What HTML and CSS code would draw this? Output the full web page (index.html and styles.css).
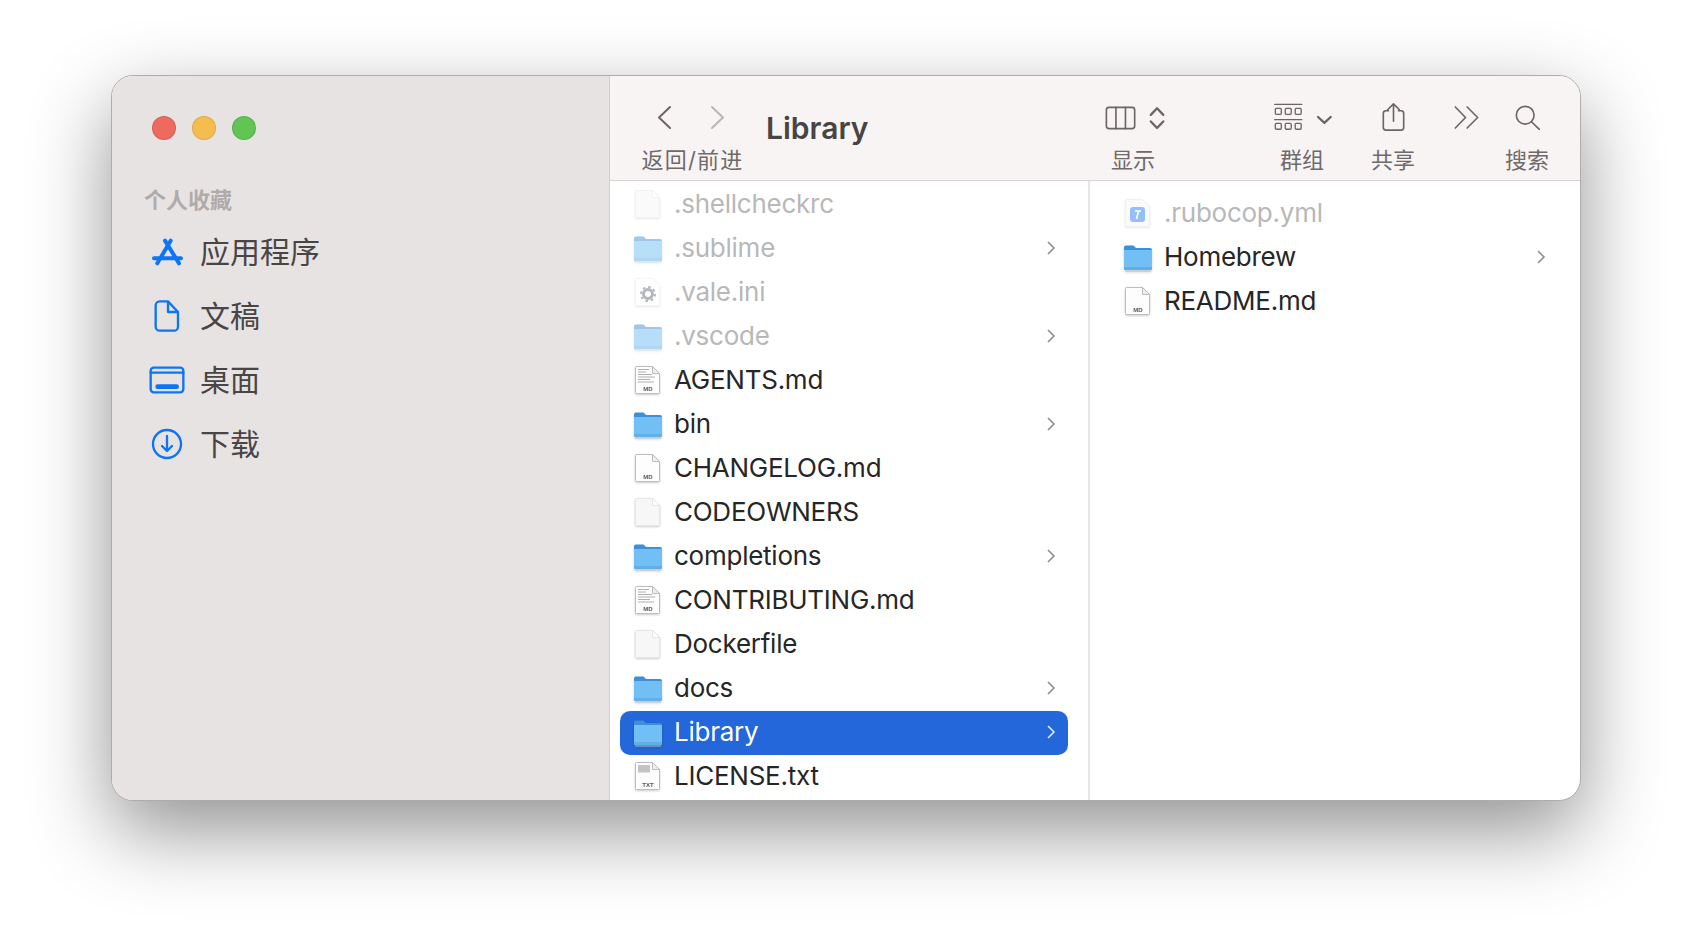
FILE: index.html
```html
<!DOCTYPE html>
<html lang="zh-CN">
<head>
    <meta charset="UTF-8">
    <title>Library</title>
    <link rel="stylesheet" href="styles.css">
</head>
<body>
    <svg class="defs" width="0" height="0">
        <symbol id="folder" viewBox="0 0 30 30">
            <path d="M1 5.500a2 2 0 0 1 2-2h7.500l2.500 2.500h14a2 2 0 0 1 2 2V12H1z" fill="#3f8fd6"/>
            <path d="M1 8h28v18.500a1.500 1.500 0 0 1-1.500 1.500h-25A1.500 1.500 0 0 1 1 26.500z" fill="#72bff5"/>
            <path d="M1 25h28v1.500a1.500 1.500 0 0 1-1.500 1.500h-25A1.500 1.500 0 0 1 1 26.500z" fill="#62aee6"/>
            <path d="M2 29h26" stroke="#b9c4cc" stroke-width="1"/>
        </symbol>
        <symbol id="file-blank" viewBox="0 0 30 30">
            <path d="M3.500 1.500h16l7 7v19a1 1 0 0 1-1 1h-22a1 1 0 0 1-1-1v-25a1 1 0 0 1 1-1z" fill="#f7f7f7" stroke="#e6e6e6"/>
            <path d="M19.500 1.500v7h7z" fill="#fff" stroke="#e6e6e6"/>
        </symbol>
        <symbol id="file-page" viewBox="0 0 30 30">
            <path d="M3.500 1.500h16l7 7v19a1 1 0 0 1-1 1h-22a1 1 0 0 1-1-1v-25a1 1 0 0 1 1-1z" fill="#fdfdfd" stroke="#bdbdbd"/>
            <path d="M19.500 1.500v7h7z" fill="#eee" stroke="#bdbdbd"/>
        </symbol>
        <symbol id="file-lines" viewBox="0 0 30 30">
            <path d="M3.500 1.500h16l7 7v19a1 1 0 0 1-1 1h-22a1 1 0 0 1-1-1v-25a1 1 0 0 1 1-1z" fill="#fdfdfd" stroke="#bdbdbd"/>
            <path d="M19.500 1.500v7h7z" fill="#eee" stroke="#bdbdbd"/>
            <path d="M5 4.500h11M5 7h8M5 9.500h14M5 12h17M5 14.500h12M5 17h16" stroke="#b0b0b0" stroke-width="1"/>
        </symbol>
        <symbol id="file-head" viewBox="0 0 30 30">
            <path d="M3.500 1.500h16l7 7v19a1 1 0 0 1-1 1h-22a1 1 0 0 1-1-1v-25a1 1 0 0 1 1-1z" fill="#fdfdfd" stroke="#bdbdbd"/>
            <path d="M19.500 1.500v7h7z" fill="#eee" stroke="#bdbdbd"/>
            <path d="M5 4h12v7.500H5z" fill="#c4c4c4"/>
        </symbol>
        <symbol id="file-ini" viewBox="0 0 30 30">
            <path d="M3.500 1.500h16l7 7v19a1 1 0 0 1-1 1h-22a1 1 0 0 1-1-1v-25a1 1 0 0 1 1-1z" fill="#fff" stroke="#eee"/>
            <circle cx="15" cy="17" r="4.500" fill="none" stroke="#66747a" stroke-width="3"/>
            <circle cx="15" cy="17" r="7" fill="none" stroke="#66747a" stroke-width="2" stroke-dasharray="2.500 3"/>
        </symbol>
        <symbol id="file-yml" viewBox="0 0 30 30">
            <path d="M3.500 1.500h16l7 7v19a1 1 0 0 1-1 1h-22a1 1 0 0 1-1-1v-25a1 1 0 0 1 1-1z" fill="#f7f7f7" stroke="#e2e2e2"/>
            <rect x="7" y="9" width="15" height="15" rx="3" fill="#2f7ff0"/>
            <path d="M12 13h6M15.500 13l-2 8" stroke="#fff" stroke-width="1.600"/>
        </symbol>
        <symbol id="chevron" viewBox="0 0 10 18">
            <path d="M2 3l6 6-6 6" fill="none" stroke="currentColor" stroke-width="1.500"/>
        </symbol>
    </svg>

    <div class="window">
        <div class="sidebar">
            <div class="lights">
                <span class="light red"></span>
                <span class="light yellow"></span>
                <span class="light green"></span>
            </div>
            <div class="side-heading">个人收藏</div>
            <div class="side-item">
                <span class="side-icon">
                    <svg viewBox="150 530 105 90" width="35" height="30" class="blue-line" stroke-width="12">
                        <path d="M195 541L237 609M212 541L172 609M162 594H243"/>
                    </svg>
                </span>
                应用程序
            </div>
            <div class="side-item">
                <span class="side-icon">
                    <svg viewBox="160 714 84 102" width="28" height="34" class="blue-line" stroke-width="7">
                        <path d="M180 721H205L235 753V797a12 12 0 0 1-12 12H180a12 12 0 0 1-12-12V733a12 12 0 0 1 12-12zM205 721V753H235"/>
                    </svg>
                </span>
                文稿
            </div>
            <div class="side-item">
                <span class="side-icon">
                    <svg viewBox="148 916 108 84" width="36" height="28" class="blue-line" stroke-width="7">
                        <rect x="153" y="921" width="98" height="74" rx="9"/>
                        <path d="M153 936H251"/>
                        <path d="M174 978H231" stroke-width="14"/>
                    </svg>
                </span>
                桌面
            </div>
            <div class="side-item">
                <span class="side-icon">
                    <svg viewBox="156 1101 96 96" width="32" height="32" class="blue-line" stroke-width="7">
                        <circle cx="204" cy="1149" r="42"/>
                        <path d="M204 1125V1170M189 1155L204 1170L219 1155"/>
                    </svg>
                </span>
                下载
            </div>
        </div>

        <div class="main">
            <div class="toolbar">
                <div class="tool nav-tool">
                    <div class="tool-icon nav-arrows">
                        <svg viewBox="0 0 14 24" width="14" height="24" class="tool-line" stroke-width="2"><path d="M13 2L2 12.500L13 23"/></svg>
                        <svg viewBox="0 0 14 24" width="14" height="24" class="tool-line faded" stroke-width="2"><path d="M1 2L12 12.500L1 23"/></svg>
                    </div>
                    <div class="tool-label">返回/前进</div>
                </div>
                <div class="title">Library</div>
                <div class="tool view-tool">
                    <div class="tool-icon">
                        <svg viewBox="44 105 180 76" width="60" height="25" class="tool-line" stroke-width="5">
                            <rect x="47" y="112" width="86" height="65" rx="8"/>
                            <path d="M76 112V177M105 112V177"/>
                            <path d="M182 135L201 115L220 135M182 155L201 175L220 155" stroke-width="7"/>
                        </svg>
                    </div>
                    <div class="tool-label">显示</div>
                </div>
                <div class="tool group-tool">
                    <div class="tool-icon">
                        <svg viewBox="553 98 175 84" width="58" height="28" class="tool-line" stroke-width="4">
                            <path d="M555 102H637M555 148H637"/>
                            <rect x="557" y="114" width="18" height="18" rx="3"/>
                            <rect x="587" y="114" width="18" height="18" rx="3"/>
                            <rect x="617" y="114" width="18" height="18" rx="3"/>
                            <rect x="557" y="159" width="18" height="18" rx="3"/>
                            <rect x="587" y="159" width="18" height="18" rx="3"/>
                            <rect x="617" y="159" width="18" height="18" rx="3"/>
                            <path d="M686 140L705 158L724 140" stroke-width="7"/>
                        </svg>
                    </div>
                    <div class="tool-label">群组</div>
                </div>
                <div class="tool share-tool">
                    <div class="tool-icon">
                        <svg viewBox="875 92 70 90" width="23" height="30" class="tool-line" stroke-width="5">
                            <path d="M895 118H887a8 8 0 0 0-8 8V169a8 8 0 0 0 8 8H933a8 8 0 0 0 8-8V126a8 8 0 0 0-8-8H925"/>
                            <path d="M910 98V150M892 115L910 97L928 115"/>
                        </svg>
                    </div>
                    <div class="tool-label">共享</div>
                </div>
                <div class="tool more-tool">
                    <div class="tool-icon">
                        <svg viewBox="1093 110 76 70" width="25" height="23" class="tool-line" stroke-width="5">
                            <path d="M1097 113L1128 145L1097 177M1133 113L1165 145L1133 177"/>
                        </svg>
                    </div>
                </div>
                <div class="tool search-tool">
                    <div class="tool-icon">
                        <svg viewBox="1274 102 76 76" width="25" height="25" class="tool-line" stroke-width="5">
                            <circle cx="1305" cy="133" r="27"/>
                            <path d="M1324 153L1348 176"/>
                        </svg>
                    </div>
                    <div class="tool-label">搜索</div>
                </div>
            </div>

            <div class="columns">
                <div class="column first">
                    <div class="row hidden"><svg class="file-icon" viewBox="0 0 30 30"><use href="#file-blank"/></svg><span class="name">.shellcheckrc</span></div>
                    <div class="row hidden"><svg class="file-icon" viewBox="0 0 30 30"><use href="#folder"/></svg><span class="name">.sublime</span><svg class="chev"><use href="#chevron"/></svg></div>
                    <div class="row hidden"><svg class="file-icon" viewBox="0 0 30 30"><use href="#file-ini"/></svg><span class="name">.vale.ini</span></div>
                    <div class="row hidden"><svg class="file-icon" viewBox="0 0 30 30"><use href="#folder"/></svg><span class="name">.vscode</span><svg class="chev"><use href="#chevron"/></svg></div>
                    <div class="row"><svg class="file-icon" viewBox="0 0 30 30"><use href="#file-lines"/><text x="15" y="26" class="file-tag">MD</text></svg><span class="name">AGENTS.md</span></div>
                    <div class="row"><svg class="file-icon" viewBox="0 0 30 30"><use href="#folder"/></svg><span class="name">bin</span><svg class="chev"><use href="#chevron"/></svg></div>
                    <div class="row"><svg class="file-icon" viewBox="0 0 30 30"><use href="#file-page"/><text x="15" y="26" class="file-tag">MD</text></svg><span class="name">CHANGELOG.md</span></div>
                    <div class="row"><svg class="file-icon" viewBox="0 0 30 30"><use href="#file-blank"/></svg><span class="name">CODEOWNERS</span></div>
                    <div class="row"><svg class="file-icon" viewBox="0 0 30 30"><use href="#folder"/></svg><span class="name">completions</span><svg class="chev"><use href="#chevron"/></svg></div>
                    <div class="row"><svg class="file-icon" viewBox="0 0 30 30"><use href="#file-lines"/><text x="15" y="26" class="file-tag">MD</text></svg><span class="name">CONTRIBUTING.md</span></div>
                    <div class="row"><svg class="file-icon" viewBox="0 0 30 30"><use href="#file-blank"/></svg><span class="name">Dockerfile</span></div>
                    <div class="row"><svg class="file-icon" viewBox="0 0 30 30"><use href="#folder"/></svg><span class="name">docs</span><svg class="chev"><use href="#chevron"/></svg></div>
                    <div class="row selected"><svg class="file-icon" viewBox="0 0 30 30"><use href="#folder"/></svg><span class="name">Library</span><svg class="chev"><use href="#chevron"/></svg></div>
                    <div class="row"><svg class="file-icon" viewBox="0 0 30 30"><use href="#file-head"/><text x="15" y="26" class="file-tag">TXT</text></svg><span class="name">LICENSE.txt</span></div>
                </div>
                <div class="column second">
                    <div class="row hidden"><svg class="file-icon" viewBox="0 0 30 30"><use href="#file-yml"/></svg><span class="name">.rubocop.yml</span></div>
                    <div class="row"><svg class="file-icon" viewBox="0 0 30 30"><use href="#folder"/></svg><span class="name">Homebrew</span><svg class="chev"><use href="#chevron"/></svg></div>
                    <div class="row"><svg class="file-icon" viewBox="0 0 30 30"><use href="#file-page"/><text x="15" y="26" class="file-tag">MD</text></svg><span class="name">README.md</span></div>
                </div>
            </div>
        </div>
    </div>
</body>
</html>
```

FILE: styles.css
```css
html, body {
    height: 100%;
}
body {
    margin: 0;
    padding: 75px 0 0 111px;
    box-sizing: border-box;
    height: 948px;
    overflow: hidden;
    background-color: white;
    font-family: Inter, "Noto Sans CJK SC", sans-serif;
}
.defs {
    position: absolute;
}
.file-tag {
    font-family: "Liberation Sans", sans-serif;
    font-size: 6px;
    font-weight: bold;
    letter-spacing: 0;
    text-anchor: middle;
    fill: #555;
}
.window {
    width: 1470px;
    height: 726px;
    box-sizing: border-box;
    display: flex;
    overflow: hidden;
    background-color: white;
    border: 1px solid #b0acac;
    border-radius: 22px;
    box-shadow: 0 30px 80px rgba(0, 0, 0, 0.43);
}

/* sidebar */
.sidebar {
    width: 498px;
    flex: none;
    box-sizing: border-box;
    padding: 40px 0 0 35px;
    background-color: #e8e3e3;
    border-right: 1px solid #d3cfcf;
}
.lights {
    display: flex;
    gap: 16px;
    margin-left: 5px;
}
.light {
    width: 24px;
    height: 24px;
    box-sizing: border-box;
    border-radius: 50%;
    border: 1px solid rgba(0, 0, 0, 0.1);
}
.red {
    background-color: #ee6a5f;
}
.yellow {
    background-color: #f5bd4f;
}
.green {
    background-color: #61c454;
}
.side-heading {
    margin: 45px 0 3px -3px;
    font-size: 22px;
    line-height: 30px;
    font-weight: bold;
    color: #b0abab;
}
.side-item {
    display: flex;
    align-items: center;
    gap: 13px;
    height: 64px;
    font-size: 30px;
    color: #494545;
}
.side-icon {
    width: 40px;
    padding-top: 3px;
    display: flex;
    justify-content: center;
}
.blue-line {
    fill: none;
    stroke: #0b75f5;
    stroke-linecap: round;
    stroke-linejoin: round;
}

/* toolbar */
.main {
    flex: 1;
    display: flex;
    flex-direction: column;
    min-width: 0;
}
.toolbar {
    height: 105px;
    flex: none;
    box-sizing: border-box;
    display: flex;
    padding: 23px 31px 0 30px;
    background-color: #f9f4f4;
    border-bottom: 1px solid #d9d5d5;
}
.tool {
    display: flex;
    flex-direction: column;
    align-items: center;
}
.tool-icon {
    height: 36px;
    display: flex;
    align-items: center;
}
.tool-label {
    margin-top: 12px;
    font-size: 22px;
    line-height: 26px;
    color: #6f6a6a;
    white-space: nowrap;
}
.tool-line {
    fill: none;
    stroke: #6b6565;
    stroke-linecap: round;
    stroke-linejoin: round;
}
.faded {
    stroke: #b9b5b5;
}
.nav-tool {
    width: 102px;
}
.nav-tool .tool-label {
    margin-left: 3px;
    letter-spacing: 1.2px;
}
.nav-arrows {
    gap: 40px;
}
.title {
    flex: 1;
    margin: 11px 0 0 24px;
    font-size: 30px;
    line-height: 36px;
    font-weight: 600;
    color: #484444;
}
.view-tool, .group-tool {
    width: 60px;
}
.view-tool .tool-label {
    margin-right: 4px;
}
.group-tool {
    margin-left: 108px;
}
.group-tool .tool-label {
    margin-right: 2px;
}
.share-tool {
    margin-left: 38px;
    width: 44px;
}
.more-tool {
    margin-left: 39px;
    width: 25px;
}
.search-tool {
    margin-left: 26px;
    width: 44px;
}

/* columns */
.columns {
    flex: 1;
    display: flex;
    min-height: 0;
}
.column {
    box-sizing: border-box;
}
.first {
    width: 480px;
    flex: none;
    padding: 2px 20px 0 10px;
    border-right: 2px solid #e6e6e6;
}
.second {
    flex: 1;
    padding: 11px 22px 0 20px;
}
.row {
    display: flex;
    align-items: center;
    box-sizing: border-box;
    height: 44px;
    padding: 0 12px 2px 13px;
    border-radius: 10px;
    font-size: 26px;
    letter-spacing: -0.25px;
    color: #262626;
}
.file-icon {
    width: 30px;
    height: 30px;
    flex: none;
    filter: drop-shadow(0 1px 1px rgba(0, 0, 0, 0.2));
}
.name {
    flex: 1;
    margin-left: 11px;
    padding-bottom: 2px;
    white-space: nowrap;
}
.chev {
    width: 10px;
    height: 18px;
    flex: none;
    color: #8a8a8a;
}
.hidden {
    color: #b8b8b8;
}
.hidden .file-icon {
    opacity: 0.5;
}
.selected {
    background-color: #2467da;
    color: white;
}
.selected .chev {
    color: #e8eefb;
}
```
